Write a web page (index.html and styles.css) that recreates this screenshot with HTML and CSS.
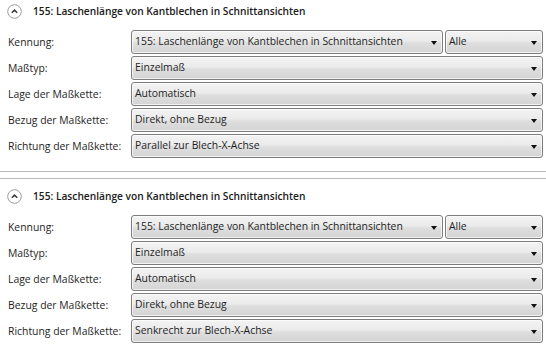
FILE: index.html
```html
<!DOCTYPE html>
<html lang="de">
<head>
    <meta charset="UTF-8">
    <title>Bemaßung</title>
    <link rel="stylesheet" href="styles.css">
</head>
<body>
    <div class="section first">
        <div class="section-header">
            <span class="toggle">
                <svg width="15" height="15" viewBox="0 0 15 15"><circle cx="7.5" cy="7.5" r="6.8" fill="#fff" stroke="#9c9c9c"/><path d="M4.8 8.8 L7.5 6.1 L10.2 8.8" fill="none" stroke="#3c3c3c" stroke-width="1.6"/></svg>
            </span>
            <span class="section-title">155: Laschenlänge von Kantblechen in Schnittansichten</span>
        </div>
        <div class="rows">
            <div class="row">
                <div class="label">Kennung:</div>
                <div class="combo wide">155: Laschenlänge von Kantblechen in Schnittansichten</div>
                <div class="combo small">Alle</div>
            </div>
            <div class="row">
                <div class="label">Maßtyp:</div>
                <div class="combo">Einzelmaß</div>
            </div>
            <div class="row">
                <div class="label">Lage der Maßkette:</div>
                <div class="combo">Automatisch</div>
            </div>
            <div class="row">
                <div class="label">Bezug der Maßkette:</div>
                <div class="combo">Direkt, ohne Bezug</div>
            </div>
            <div class="row">
                <div class="label">Richtung der Maßkette:</div>
                <div class="combo">Parallel zur Blech-X-Achse</div>
            </div>
        </div>
    </div>

    <div class="section second">
        <div class="section-header">
            <span class="toggle">
                <svg width="15" height="15" viewBox="0 0 15 15"><circle cx="7.5" cy="7.5" r="6.8" fill="#fff" stroke="#9c9c9c"/><path d="M4.8 8.8 L7.5 6.1 L10.2 8.8" fill="none" stroke="#3c3c3c" stroke-width="1.6"/></svg>
            </span>
            <span class="section-title">155: Laschenlänge von Kantblechen in Schnittansichten</span>
        </div>
        <div class="rows">
            <div class="row">
                <div class="label">Kennung:</div>
                <div class="combo wide">155: Laschenlänge von Kantblechen in Schnittansichten</div>
                <div class="combo small">Alle</div>
            </div>
            <div class="row">
                <div class="label">Maßtyp:</div>
                <div class="combo">Einzelmaß</div>
            </div>
            <div class="row">
                <div class="label">Lage der Maßkette:</div>
                <div class="combo">Automatisch</div>
            </div>
            <div class="row">
                <div class="label">Bezug der Maßkette:</div>
                <div class="combo">Direkt, ohne Bezug</div>
            </div>
            <div class="row">
                <div class="label">Richtung der Maßkette:</div>
                <div class="combo">Senkrecht zur Blech-X-Achse</div>
            </div>
        </div>
    </div>
</body>
</html>
```
FILE: styles.css
```css
body {
    margin: 0;
    background-color: #ffffff;
    font-family: "Open Sans", Arial, sans-serif;
    font-size: 10.4px;
    color: #1e1e1e;
}
.section {
    padding-bottom: 13px;
}
.section.first {
    border-bottom: 1px solid #b9b9b9;
}
.section.second {
    margin-top: 6px;
    border-top: 1px solid #b9b9b9;
    padding-top: 6px;
}
.section-header {
    display: flex;
    align-items: center;
    height: 22px;
}
.toggle {
    display: flex;
    width: 15px;
    height: 15px;
    margin-left: 7px;
    margin-right: 11px;
}
.section-title {
    font-size: 10.2px;
    font-weight: 600;
    color: #1b1b1b;
}
.rows {
    display: flex;
    flex-direction: column;
    gap: 2px;
    margin-top: 8px;
    padding: 0 3px 0 8px;
}
.row {
    display: flex;
    align-items: center;
    gap: 2px;
    height: 24px;
}
.label {
    width: 121px;
    flex-shrink: 0;
}
.combo {
    position: relative;
    flex: 1;
    box-sizing: border-box;
    height: 24px;
    line-height: 21px;
    padding-left: 3px;
    border: 1px solid #7d7d7d;
    border-radius: 3px;
    background: linear-gradient(#f3f3f3 0%, #ebebeb 45%, #dedede 55%, #d4d4d4 100%);
    box-shadow: inset 0 0 0 1px rgba(255, 255, 255, 0.7);
    white-space: nowrap;
}
.combo::after {
    content: "";
    position: absolute;
    right: 5px;
    top: 10px;
    border-left: 3.5px solid transparent;
    border-right: 3.5px solid transparent;
    border-top: 4px solid #111111;
}
.combo.wide {
    flex: 0 0 312px;
}
.combo.small {
    flex: 1;
}
```
